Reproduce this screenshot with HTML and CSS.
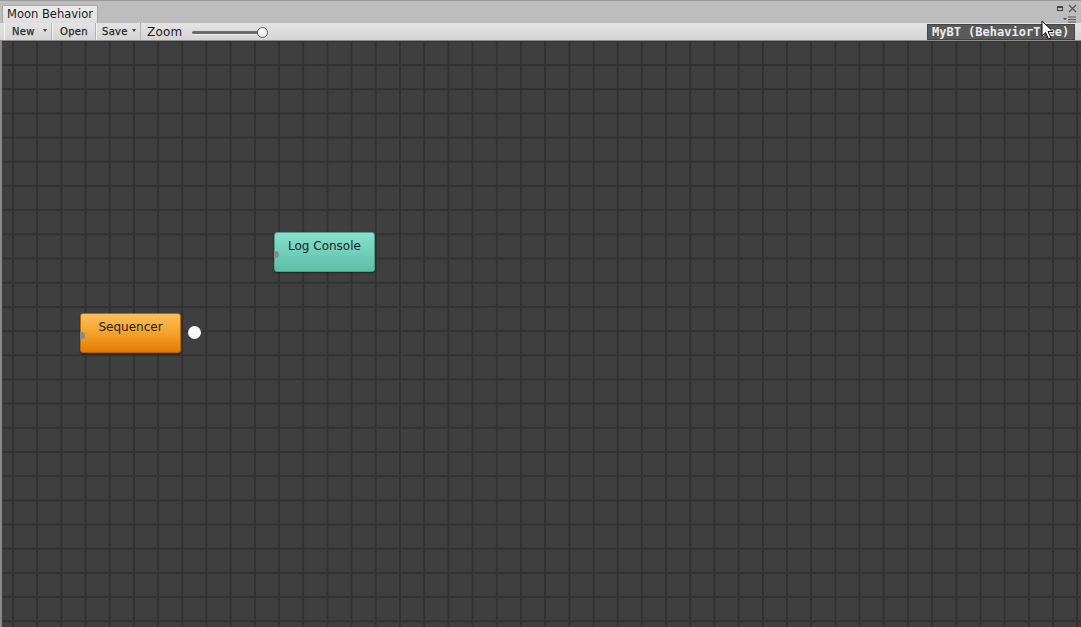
FILE: index.html
```html
<!DOCTYPE html>
<html>
<head>
<meta charset="utf-8">
<link rel="stylesheet" href="styles.css">
</head>
<body>
<div class="window">
  <div class="titlebar">
    <div class="tab">Moon Behavior</div>
    <div class="win-icons">
      <div class="win-row">
        <span class="max-icon"></span>
        <svg class="close-icon" width="9" height="9" viewBox="0 0 9 9"><path d="M1 1L8 8M8 1L1 8" stroke="#555" stroke-width="1.3"/></svg>
      </div>
      <div class="win-row menu-row">
        <svg width="14" height="7" viewBox="0 0 14 7"><path d="M0 2h4l-2 2z" fill="#444"/><path d="M5 1h8M5 3.5h8M5 6h8" stroke="#555" stroke-width="1"/></svg>
      </div>
    </div>
  </div>
  <div class="toolbar">
    <div class="tb-btn drop">New<span class="caret"></span></div>
    <div class="tb-btn open">Open</div>
    <div class="tb-btn drop save">Save<span class="caret"></span></div>
    <div class="zoom-label">Zoom</div>
    <div class="slider"><div class="track"></div><div class="thumb"></div></div>
    <div class="spacer"></div>
    <div class="asset-label">MyBT (BehaviorTree)</div>
  </div>
  <div class="canvas">
    <div class="node log">Log Console<span class="port"></span></div>
    <div class="node seq">Sequencer<span class="port"></span></div>
    <div class="out-dot"></div>
  </div>
  <svg class="cursor" width="14" height="20" viewBox="0 0 14 20"><path d="M1 1L1 16L4.5 12.5L7.5 19L10 18L7 11.5L12 11.5Z" fill="#fff" stroke="#000" stroke-width="1"/></svg>
</div>
</body>
</html>
```
FILE: styles.css
```css
* { box-sizing: border-box; }
html, body { margin: 0; padding: 0; }
body {
  width: 1081px;
  height: 627px;
  overflow: hidden;
  font-family: "DejaVu Sans", sans-serif;
  background: #3d3d3d;
}
.window {
  position: relative;
  width: 1081px;
  height: 627px;
  display: flex;
  flex-direction: column;
}
.titlebar {
  height: 23px;
  background: #bdbdbd;
  border-top: 1px solid #9a9a9a;
  display: flex;
  align-items: flex-end;
  padding-left: 2px;
  position: relative;
}
.tab {
  height: 18px;
  width: 96px;
  background: linear-gradient(#ececec, #dedede);
  border: 1px solid #a8a8a8;
  border-bottom: none;
  border-radius: 2px 2px 0 0;
  font-size: 11.5px;
  color: #1a1a1a;
  padding-left: 4px;
  line-height: 17px;
  white-space: nowrap;
}
.win-icons {
  margin-left: auto;
  display: flex;
  flex-direction: column;
  align-items: flex-end;
  padding-right: 4px;
  align-self: flex-start;
  padding-top: 2px;
}
.win-row { display: flex; align-items: center; gap: 5px; height: 10px; }
.max-icon {
  width: 6px; height: 5px;
  border: 1px solid #444;
  border-top-width: 2px;
}
.menu-row { margin-top: 1px; }
.toolbar {
  height: 18px;
  background: linear-gradient(#e4e4e4, #d4d4d4);
  border-bottom: 1px solid #8c8c8c;
  display: flex;
  align-items: stretch;
  padding-left: 4px;
}
.tb-btn {
  font-size: 10px;
  color: #2a2a2a;
  letter-spacing: 0.3px;
  display: flex;
  align-items: center;
  border-right: 1px solid #b4b4b4;
  border-left: 1px solid #f4f4f4;
  position: relative;
  padding-left: 7px;
  -webkit-text-stroke: 0.25px #2a2a2a;
}
.tb-btn:first-child { width: 48px; }
.tb-btn.open { width: 44px; padding-left: 7px; }
.tb-btn.save { width: 45px; padding-left: 5px; }
.caret {
  position: absolute;
  right: 4px;
  top: 6px;
  border-left: 2px solid transparent;
  border-right: 2px solid transparent;
  border-top: 3px solid #444;
}
.zoom-label {
  font-size: 12px;
  color: #1e1e1e;
  display: flex;
  align-items: center;
  padding-left: 6px;
  letter-spacing: 0.2px;
}
.slider {
  position: relative;
  width: 80px;
  margin-left: 9px;
}
.track {
  position: absolute;
  left: 1px; right: 8px; top: 8px;
  height: 3px;
  background: #6a6a6a;
  border-radius: 2px;
  box-shadow: 0 1px 0 #f0f0f0;
}
.thumb {
  position: absolute;
  left: 66px; top: 4px;
  width: 11px; height: 11px;
  border-radius: 50%;
  background: radial-gradient(circle at 40% 35%, #ffffff, #e0e0e0);
  border: 1px solid #5c5c5c;
}
.spacer { flex: 1; }
.asset-label {
  align-self: center;
  height: 16px;
  margin-right: 6px;
  background: #5a5a5a;
  border: 1px solid #454545;
  color: #ececec;
  font-family: "DejaVu Sans Mono", monospace;
  font-weight: bold;
  font-size: 12px;
  line-height: 14px;
  padding: 0 4px 0 4px;
  width: 148px;
  white-space: nowrap;
}
.canvas {
  flex: 1;
  position: relative;
  background-color: #3f3f3f;
  background-image:
    linear-gradient(to right, #323232 0, #323232 2px, transparent 2px),
    linear-gradient(to bottom, #323232 0, #323232 2px, transparent 2px);
  background-size: 24.2px 24.2px;
  background-position: 10px 23px;
  border-left: 2px solid #8a8a8a;
  overflow: hidden;
}
.node {
  position: absolute;
  width: 101px;
  height: 40px;
  border-radius: 3px;
  font-size: 12px;
  color: #1c1c1c;
  text-align: center;
  padding-top: 6px;
  box-shadow: 0 1px 2px rgba(0,0,0,0.45);
}
.node.log {
  left: 272px; top: 191px;
  background: linear-gradient(#86e0cc, #5ebfa7);
  border: 1px solid #4f9d8b;
}
.node.seq {
  left: 78px; top: 272px;
  background: linear-gradient(#fbc05a, #f29c22 60%, #e47a04);
  border: 1px solid #b86806;
}
.port {
  position: absolute;
  left: -1px;
  top: 18px;
  width: 5px;
  height: 7px;
  border-radius: 0 4px 4px 0;
  background: #8a8a8a;
}
.out-dot {
  position: absolute;
  left: 186px; top: 285px;
  width: 13px; height: 13px;
  border-radius: 50%;
  background: #fafafa;
}
.cursor {
  position: absolute;
  left: 1041px;
  top: 20px;
}
```
